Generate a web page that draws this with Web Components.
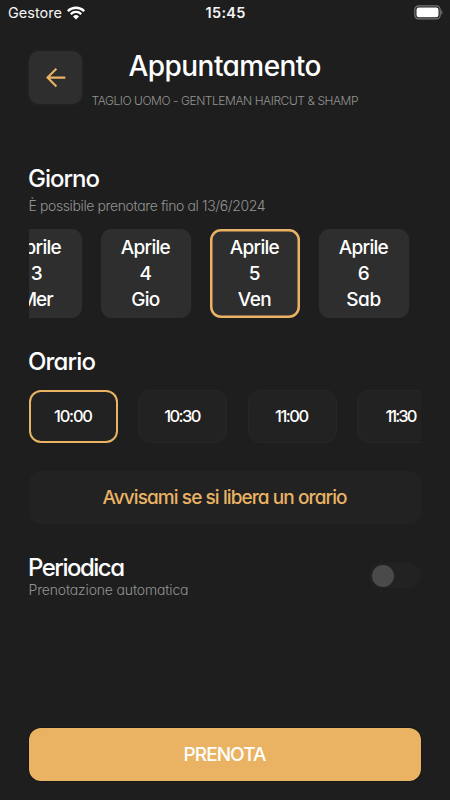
<!DOCTYPE html>
<html lang="it">
<head>
<meta charset="utf-8">
<title>Appuntamento</title>
<style>
html,body{margin:0;height:100%;background:#1e1e1e}
body{font-family:Inter,"Liberation Sans",sans-serif;color:#fff;overflow:hidden}
</style>
</head>
<body>
<booking-page></booking-page>
<script>
const define = (name, html, setup) => {
  const tpl = document.createElement('template');
  tpl.innerHTML = html;
  customElements.define(name, class extends HTMLElement {
    constructor() {
      super();
      this.attachShadow({mode: 'open'}).append(tpl.content.cloneNode(true));
    }
    connectedCallback() { if (setup) setup(this, this.shadowRoot); }
  });
};

/* A single line of text whose tracking is tuned so that it spans the given width. */
define('fit-text', `<style>
:host{display:block;white-space:nowrap;font-feature-settings:"cv11","ss03"}
span{display:inline-block}
</style><span><slot></slot></span>`, (el, root) => {
  const s = root.querySelector('span');
  const n = el.textContent.length;
  const w = parseFloat(el.getAttribute('span'));
  s.style.letterSpacing = '0px';
  const gap = (w - s.getBoundingClientRect().width) / (n - 1 || 1);
  s.style.letterSpacing = gap + 'px';
  s.style.marginRight = -gap + 'px';
});

define('status-bar', `<style>
:host{display:grid;grid-template-columns:1fr auto 1fr;align-items:center;height:25px;padding:0 7px 0 8px;box-sizing:border-box;color:#f4f4f4}
.l{display:flex;align-items:center;gap:5px;font-size:14.5px}
.c{font-size:14.5px;font-weight:600}
svg{display:block}.b{justify-self:end;margin-top:-1px}
</style>
<div class="l"><fit-text span="54">Gestore</fit-text>
<svg width="18" height="14" viewBox="0 0 18 14" fill="none" stroke="#fff" stroke-width="2.3"><path d="M.8 5.1a11.7 11.7 0 0 1 16.4 0M3.8 8.1a7.4 7.4 0 0 1 10.4 0"/><path d="M9 13.4l-3-3a4.3 4.3 0 0 1 6 0z" fill="#fff" stroke="none"/></svg></div>
<fit-text class="c" span="40">15:45</fit-text>
<svg class="b" width="29" height="15" viewBox="0 0 29 15"><rect x=".8" y=".9" width="25.4" height="13" rx="3.8" fill="none" stroke="#777" stroke-width="1.2"/><rect x="2.5" y="2.6" width="22" height="9.6" rx="2.2" fill="#fff"/><path d="M27.3 5.2c1.6.6 1.6 3.8 0 4.4z" fill="#777"/></svg>`);

define('back-button', `<style>
:host{display:grid;place-items:center;width:53px;height:53px;border-radius:10px;background:#2e2e2e;box-shadow:0 0 4px #292929}
svg{display:block}
</style><svg width="20" height="20" viewBox="0 0 20 20" fill="none" stroke="#eab364" stroke-width="2.1"><path d="M19.3 9.6H1.8M10.4 .8L1.5 9.6l8.9 8.8"/></svg>`);

define('page-header', `<style>
:host{display:grid;grid-template-columns:53px 1fr 53px;padding:0 29px;height:60px;margin-top:24px}
back-button{margin-top:2px}
div{display:flex;flex-direction:column;align-items:center}
</style><back-button></back-button><div><slot></slot></div>`);

define('day-card', `<style>
:host{display:flex;flex:none;flex-direction:column;align-items:center;box-sizing:border-box;width:90px;height:89px;padding-top:6px;border-radius:11px;background:#2e2e2e;font-size:19px;font-weight:500;line-height:26px;box-shadow:0 0 2px #292929}
:host([selected]){box-shadow:inset 0 0 0 2.5px #eab364}
</style><slot></slot>`);

define('time-slot', `<style>
:host{display:flex;flex:none;align-items:center;justify-content:center;box-sizing:border-box;width:89px;height:53px;padding-bottom:1px;border-radius:12px;background:#222;border:1px solid #262626;font-size:16.5px;font-weight:500;line-height:26px}
:host([selected]){border:2.5px solid #eab364}
</style><slot></slot>`);

define('scroll-row', `<style>
:host{display:flex;overflow:hidden}
</style><slot></slot>`);

define('action-button', `<style>
:host{display:flex;align-items:center;justify-content:center;height:53px;border-radius:12px;background:#222;color:#eab364;font-size:19px;font-weight:500;line-height:26px}
:host([primary]){background:#eab364;color:#fff;box-shadow:0 0 1.5px #000}
</style><slot></slot>`);

define('toggle-switch', `<style>
:host{display:flex;align-items:center;box-sizing:border-box;width:52px;height:25px;padding:0 3px;border-radius:13px;background:#222}
i{width:22px;height:22px;border-radius:50%;background:#4a4a4a}
</style><i></i>`);

define('booking-page', `<style>
:host{display:flex;flex-direction:column;height:800px;width:450px;background:#1e1e1e}
main{display:flex;flex-direction:column;flex:1;padding:0 29px 19px;margin-top:55px}
.t{font-size:28px;line-height:34px;font-weight:500}
.s{font-size:12px;line-height:16px;margin-top:9.5px;font-weight:300;color:#929493}
.h{font-size:24px;line-height:30px;font-weight:500;margin-left:-1px}
.m{font-size:14px;line-height:20px;font-weight:300;color:#929493;margin-left:-.5px}
.days{gap:19px;margin-top:13px}
.days day-card:first-child{margin-left:-37.3px}
.times{gap:20.3px;margin-top:13px}
.o{margin-top:29px}
.n{margin-top:28px}
.p{display:flex;justify-content:space-between;margin-top:29px}
.p toggle-switch{margin-top:10px}
.go{margin-top:auto}
</style>
<status-bar></status-bar>
<page-header><fit-text class="t" span="193">Appuntamento</fit-text><fit-text class="s" span="267">TAGLIO UOMO - GENTLEMAN HAIRCUT &amp; SHAMP</fit-text></page-header>
<main>
<fit-text class="h" span="72">Giorno</fit-text>
<fit-text class="m" style="margin-top:2px" span="237">È possibile prenotare fino al 13/6/2024</fit-text>
<scroll-row class="days">
<day-card><fit-text span="50">Aprile</fit-text><fit-text span="12">3</fit-text><fit-text span="34">Mer</fit-text></day-card>
<day-card><fit-text span="50">Aprile</fit-text><fit-text span="12">4</fit-text><fit-text span="29">Gio</fit-text></day-card>
<day-card selected><fit-text span="50">Aprile</fit-text><fit-text span="12">5</fit-text><fit-text span="34">Ven</fit-text></day-card>
<day-card><fit-text span="50">Aprile</fit-text><fit-text span="12">6</fit-text><fit-text span="35">Sab</fit-text></day-card>
</scroll-row>
<fit-text class="h o" span="68">Orario</fit-text>
<scroll-row class="times">
<time-slot selected><fit-text span="39">10:00</fit-text></time-slot>
<time-slot><fit-text span="37">10:30</fit-text></time-slot>
<time-slot><fit-text span="34">11:00</fit-text></time-slot>
<time-slot><fit-text span="32">11:30</fit-text></time-slot>
</scroll-row>
<action-button class="n"><fit-text span="245">Avvisami se si libera un orario</fit-text></action-button>
<div class="p"><div><fit-text class="h" span="97">Periodica</fit-text><fit-text class="m" style="line-height:18px;margin-top:-2px" span="160">Prenotazione automatica</fit-text></div><toggle-switch></toggle-switch></div>
<action-button class="go" primary><fit-text span="83">PRENOTA</fit-text></action-button>
</main>`);
</script>
</body>
</html>
